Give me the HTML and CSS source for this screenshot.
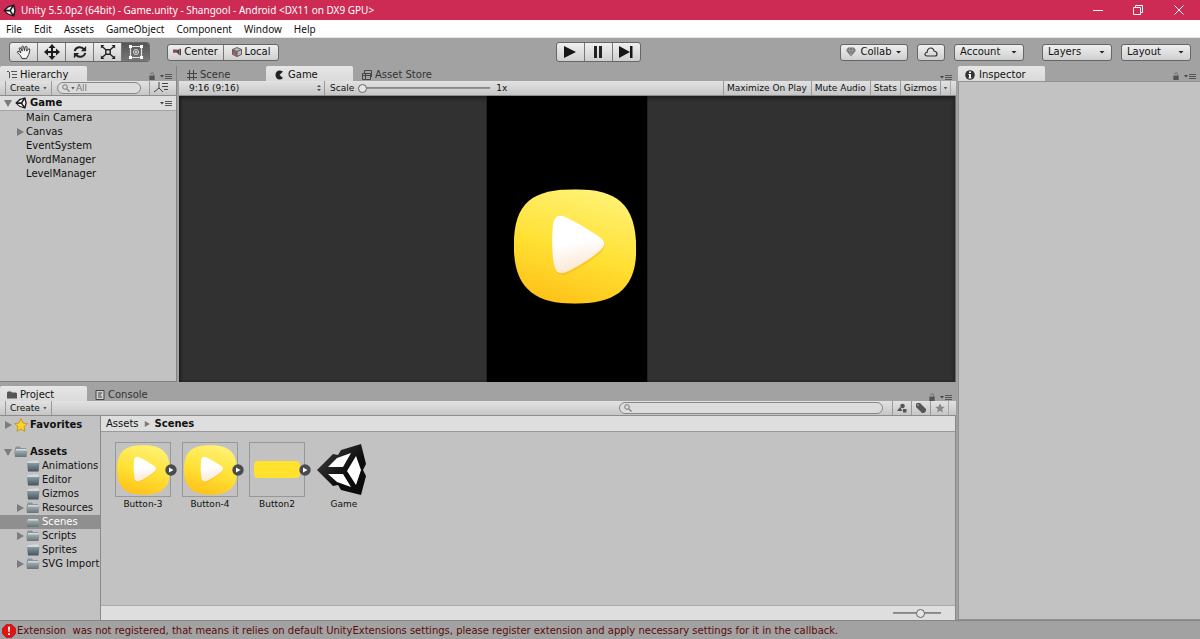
FILE: index.html
```html
<!DOCTYPE html>
<html lang="en">
<head>
<meta charset="utf-8">
<title>Unity 5.5.0p2 (64bit) - Game.unity - Shangool</title>
<link rel="stylesheet" href="styles.css">
</head>
<body>
<svg class="sprite" aria-hidden="true">
  <defs>
    <linearGradient id="yellow" x1="0.65" y1="0" x2="0.35" y2="1"><stop offset="0" stop-color="#fff274"/><stop offset="0.55" stop-color="#ffe033"/><stop offset="1" stop-color="#ffc219"/></linearGradient>
    <linearGradient id="white" x1="0.4" y1="0" x2="0.6" y2="1"><stop offset="0.45" stop-color="#fff"/><stop offset="1" stop-color="#fbe3cc"/></linearGradient>
    <linearGradient id="ink" x1="0" y1="0" x2="1" y2="1"><stop offset="0" stop-color="#444"/><stop offset="0.6" stop-color="#0c0c0c"/></linearGradient>
    <linearGradient id="folderfill" x1="0" y1="0" x2="0" y2="1"><stop offset="0" stop-color="#a3adaf"/><stop offset="1" stop-color="#66747a"/></linearGradient>
    <linearGradient id="foldershut" x1="0" y1="0" x2="0" y2="1"><stop offset="0" stop-color="#8b9ba3"/><stop offset="1" stop-color="#44535c"/></linearGradient>
  </defs>
  <symbol id="playart" viewBox="0 0 122 114">
    <path fill="url(#yellow)" d="M0 56C0 12 20 0 61 0C102 0 122 14 122 60C122 100 100 114 61 114C20 114 0 98 0 56Z"/>
    <path fill="#e9a21c" opacity=".3" d="M40 38Q41 26 51 29C63 34 77 43 87 50Q94 56 87 63C77 72 63 80 52 85Q43 88 41 77Q38 57 40 38Z"/>
    <path fill="url(#white)" d="M39 36Q40 24 50 27C62 32 76 41 86 48Q94 54 86 61C76 70 62 78 51 83Q42 86 40 75Q37 55 39 36Z"/>
  </symbol>
  <symbol id="unity" viewBox="0 0 50 52">
    <path fill="url(#ink)" d="M0 26L16 10L21 11L24 6L44 0L49 20L46 26L49 32L44 51L24 46L21 41L16 42Z"/>
    <path fill="#fff" d="M11 23L20 14L34 9L26 23ZM11 30H26L34 43L20 38ZM39 12L44 26L39 41L30 27Z"/>
  </symbol>
  <symbol id="unity-dark" viewBox="0 0 50 52">
    <path fill="#1a1a1a" d="M0 26L18 9L44 1L50 26L44 51L18 42Z"/>
    <path fill="#f4f4f4" d="M11 23L21 14L34 9L26 23ZM10 30H26L34 43L21 39ZM40 11L44 26L40 41L31 27Z"/>
  </symbol>
  <symbol id="hand" viewBox="0 0 18 16"><path fill="#f4f4f4" stroke="#222" stroke-linejoin="round" stroke-linecap="round" d="M6.500 15L5 12L1.500 8.500Q1.500 6.500 3.500 7.500L5.500 9L3.500 4Q4 2.500 5 3.500L7 7L6.500 2Q7.500 .5 8.500 2L9.500 6.500L10.500 2Q12 1 12.500 2.500L12 7L14 4.500Q16 4 15.500 6L14.500 10.500L12 15Z"/></symbol>
  <symbol id="move" viewBox="0 0 16 16"><path fill="#1c1c1c" d="M8 0L11.500 4H9V7H12V4.500L16 8L12 11.500V9H9V12H11.500L8 16L4.500 12H7V9H4V11.500L0 8L4 4.500V7H7V4H4.500Z"/></symbol>
  <symbol id="rotate" viewBox="0 0 16 16"><path fill="none" stroke="#222" stroke-width="2.2" d="M2 7C3 2 10 1 12.500 5M14 9C13 14 6 15 3.500 11"/><path fill="#222" d="M9 7H15V1ZM7 9H1V15Z"/></symbol>
  <symbol id="scale-tool" viewBox="0 0 18 16"><path fill="none" stroke="#222" stroke-width="1.600" d="M6.500 5.500H11.500V10.500H6.500ZM6 5L2 1.500M12 5L16 1.500M6 11L2 14.500M12 11L16 14.500"/><path fill="#222" d="M1 0H5L1 4ZM17 0H13L17 4ZM1 16H5L1 12ZM17 16H13L17 12Z"/></symbol>
  <symbol id="recttool" viewBox="0 0 16 16"><path fill="none" stroke="#e4e4e4" stroke-width="1.200" d="M2.500 2.500H13.500V13.500H2.500Z"/><circle cx="8" cy="8" r="2.500" fill="none" stroke="#ddd"/><circle cx="8" cy="8" r="1" fill="#eee"/><path fill="#fff" d="M1 1H4V4H1ZM12 1H15V4H12ZM1 12H4V15H1ZM12 12H15V15H12Z"/></symbol>
  <symbol id="pivot" viewBox="0 0 10 8"><path fill="#8b4b51" d="M0 1H5V5H0Z"/><path fill="#444" d="M5 2L8 0V8L5 5ZM8.500 0H10V8H8.500Z"/></symbol>
  <symbol id="cube" viewBox="0 0 10 10"><path fill="#bbb" stroke="#444" stroke-width=".8" d="M5 .5L9.500 2.500V7.500L5 9.500L.5 7.500V2.500Z"/><path fill="#a55b62" d="M1 3L5 5V9L1 7Z"/><path fill="none" stroke="#444" stroke-width=".8" d="M.5 2.500L5 4.500L9.500 2.500M5 4.500V9.500"/></symbol>
  <symbol id="play" viewBox="0 0 14 12"><path fill="#161616" d="M1 0L13 6L1 12Z"/></symbol>
  <symbol id="pause" viewBox="0 0 14 12"><path fill="#222" d="M3 0H6V12H3ZM8 0H11V12H8Z"/></symbol>
  <symbol id="step" viewBox="0 0 14 12"><path fill="#161616" d="M0 0L11 6L0 12ZM11 0H13.500V12H11Z"/></symbol>
  <symbol id="gem" viewBox="0 0 10 9"><path fill="#777" d="M2 0H8L10 3L5 9L0 3Z"/><path stroke="#aaa" stroke-width=".6" fill="none" d="M0 3H10M3.500 0V3L5 8L6.500 3V0"/></symbol>
  <symbol id="cloud" viewBox="0 0 14 10"><path fill="none" stroke="#333" stroke-width="1.200" d="M3 9Q.8 8.800 1 7Q1.200 5.300 3 5.500Q3.500 1 7 1Q9.500 1 10 4Q13 4.500 13 7Q13 9 11 9Z"/></symbol>
  <symbol id="list" viewBox="0 0 10 10"><path stroke="#555" d="M0 1.500H2M4 1.500H10M5 4.500H10M5 7.500H10M2.500 2V8" fill="none"/></symbol>
  <symbol id="grid" viewBox="0 0 10 10"><path stroke="#444" d="M2.500 0V10M6.500 0V10M0 3.500H10M0 7.500H10" fill="none"/></symbol>
  <symbol id="pac" viewBox="0 0 10 10"><path fill="#222" d="M8 1.500Q6 .5 4.500 .5A4 4.500 0 0 0 4.500 9.500Q6.500 9.500 8 8L4.500 5Z"/></symbol>
  <symbol id="bag" viewBox="0 0 10 10"><path fill="none" stroke="#444" d="M.5 3.500H8.500V9.500H.5ZM2.500 3V.5H9.500V7M.5 5.500H8.500M3.500 4V9"/></symbol>
  <symbol id="info" viewBox="0 0 10 10"><circle cx="5" cy="5" r="4.800" fill="#333"/><path fill="#fff" d="M4 1.500H6V3H4ZM3.500 4H6V7.500H6.500V8.500H3.500V7.500H4V5H3.500Z"/></symbol>
  <symbol id="lock" viewBox="0 0 8 9"><path fill="#555" d="M1 4H7V9H1Z"/><path fill="none" stroke="#666" d="M2.500 2.500Q3 .7 4.500 .7Q6 .8 6 4"/></symbol>
  <symbol id="menu" viewBox="0 0 12 7"><path fill="#444" d="M0 2H4L2 4.500Z"/><path stroke="#555" d="M5 1.500H12M5 3.500H12M5 5.500H12"/></symbol>
  <symbol id="tabfolder" viewBox="0 0 10 9"><path fill="#555" d="M0 2L1 1H4L5 2H9L10 3V8H0Z"/></symbol>
  <symbol id="doc" viewBox="0 0 9 10"><path fill="#d0d0d0" stroke="#444" d="M.5 .5H8.500V9.500H.5Z"/><path stroke="#444" d="M2.500 3H6.500M2.500 5H5.500M2.500 7H6.500"/></symbol>
  <symbol id="folder" viewBox="0 0 14 14"><path fill="#87949a" d="M1 3L2 1.500H6L7 3H12V6H1Z"/><path fill="#d5dadb" d="M2 4H12V6H2Z"/><path fill="url(#folderfill)" d="M0 5.500H13.500L12.500 12H1Z"/></symbol>
  <symbol id="folder-shut" viewBox="0 0 14 14"><path fill="#d5dadb" d="M1.500 3L2.500 2H6L7 1.500H12.500V5H1.500Z"/><path fill="url(#foldershut)" d="M1 4H13.500L12.500 12.500H2Z"/></symbol>
  <symbol id="star" viewBox="0 0 14 14"><path d="M7 .5L9 5L13.500 5.500L10 8.500L11 13.300L7 11L3 13.300L4 8.500L.5 5.500L5 5Z"/></symbol>
  <symbol id="search" viewBox="0 0 8 8"><circle cx="3" cy="3" r="2.300" fill="none" stroke="#777"/><path stroke="#777" stroke-width="1.200" d="M4.800 4.800L7.500 7.500"/></symbol>
  <symbol id="shapes" viewBox="0 0 10 9"><path fill="#555" d="M0 7.500L3 3.500L5.500 7.500Z"/><circle cx="5.500" cy="2.500" r="2.300" fill="#555"/><path fill="#555" d="M6 5.500H9.500V9H6Z"/></symbol>
  <symbol id="tag" viewBox="0 0 10 10"><path fill="#555" d="M0 1L1 0H4L10 6V8L8 10H6L0 4Z"/><circle cx="2" cy="2" r=".8" fill="#ccc"/></symbol>
  <symbol id="sort" viewBox="0 0 16 12"><path fill="none" stroke="#444" d="M6 0V6L1 10M6 6L10 10M9 1.500H15M9 4.500H15M11 7.500H15"/></symbol>
  <symbol id="badge" viewBox="0 0 12 12"><circle cx="6" cy="6" r="5.700" fill="#484b50"/><path fill="#fff" d="M4 3.500L8.500 6L4 8.500Z"/></symbol>
  <symbol id="error" viewBox="0 0 13 13"><path fill="#e31313" stroke="#9c0d0d" stroke-width=".6" d="M4 .5H9L12.500 4V9L9 12.500H4L.5 9V4Z"/><path fill="#fff" d="M5.500 2.500H7.500L7 7.500H6ZM5.600 8.500H7.400V10.300H5.600Z"/></symbol>
  <symbol id="right" viewBox="0 0 8 8"><path fill="#7c7c7c" d="M1 0L8 4L1 8Z"/></symbol>
  <symbol id="down" viewBox="0 0 8 8"><path fill="#7c7c7c" d="M0 1H8L4 8Z"/></symbol>
</svg>

<header class="titlebar">
  <svg class="i13"><use href="#unity-dark"/></svg>
  <h1 class="title">Unity 5.5.0p2 (64bit) - Game.unity - Shangool - Android &lt;DX11 on DX9 GPU&gt;</h1>
  <div class="winbtns">
    <button aria-label="Minimize"><svg class="i10" viewBox="0 0 10 10"><path d="M0 5.500H10"/></svg></button>
    <button aria-label="Restore"><svg class="i10" viewBox="0 0 10 10"><path d="M.5 2.500H7.500V9.500H.5ZM2.500 2.500V.5H9.500V7.500H7.500"/></svg></button>
    <button aria-label="Close"><svg class="i10" viewBox="0 0 10 10"><path d="M.5 .5L9.500 9.500M9.500 .5L.5 9.500"/></svg></button>
  </div>
</header>
<nav class="menubar">
  <button>File</button><button>Edit</button><button>Assets</button><button>GameObject</button><button>Component</button><button>Window</button><button>Help</button>
</nav>

<div class="toolbar">
  <div class="tools">
    <div class="group tall">
      <button aria-label="Hand"><svg class="i16"><use href="#hand"/></svg></button>
      <button aria-label="Move"><svg class="i16"><use href="#move"/></svg></button>
      <button aria-label="Rotate"><svg class="i14"><use href="#rotate"/></svg></button>
      <button aria-label="Scale"><svg class="i16"><use href="#scale-tool"/></svg></button>
      <button class="pressed" aria-label="Rect"><svg class="i16"><use href="#recttool"/></svg></button>
    </div>
    <div class="group wide">
      <button><svg class="i8"><use href="#pivot"/></svg>Center</button>
      <button><svg class="i10"><use href="#cube"/></svg>Local</button>
    </div>
  </div>
  <div class="group tall playback">
    <button aria-label="Play"><svg class="i14"><use href="#play"/></svg></button>
    <button aria-label="Pause"><svg class="i14"><use href="#pause"/></svg></button>
    <button aria-label="Step"><svg class="i14"><use href="#step"/></svg></button>
  </div>
  <div class="services">
    <button class="pill collab"><svg class="i10"><use href="#gem"/></svg>Collab<span class="caret"></span></button>
    <button class="pill cloud" aria-label="Cloud"><svg class="i14"><use href="#cloud"/></svg></button>
    <label class="drop"><select aria-label="Account"><option>Account</option></select><span class="caret"></span></label>
    <label class="drop apart"><select aria-label="Layers"><option>Layers</option></select><span class="caret"></span></label>
    <label class="drop"><select aria-label="Layout"><option>Layout</option></select><span class="caret"></span></label>
  </div>
</div>

<main class="workspace">
  <div class="left">
    <div class="upper">
      <section class="panel hierarchy">
        <div class="tabs">
          <button class="tab active"><svg class="i10"><use href="#list"/></svg>Hierarchy</button>
          <span class="tabtools"><svg class="i8"><use href="#lock"/></svg><svg class="menuicon"><use href="#menu"/></svg></span>
        </div>
        <div class="bar">
          <button class="cell create">Create<span class="caret small"></span></button>
          <label class="search"><svg class="i8"><use href="#search"/></svg><span class="caret small"></span><input type="text" placeholder="All" aria-label="Search hierarchy"></label>
          <button class="cell sort" aria-label="Sort"><svg class="i16"><use href="#sort"/></svg></button>
        </div>
        <div class="scene"><svg class="i8"><use href="#down"/></svg><svg class="i12"><use href="#unity-dark"/></svg><b>Game</b><svg class="menuicon end"><use href="#menu"/></svg></div>
        <ul class="rows objects">
          <li>Main Camera</li>
          <li><svg class="i8"><use href="#right"/></svg>Canvas</li>
          <li>EventSystem</li>
          <li>WordManager</li>
          <li>LevelManager</li>
        </ul>
      </section>
      <section class="panel game">
        <div class="tabs">
          <button class="tab"><svg class="i10"><use href="#grid"/></svg>Scene</button>
          <button class="tab active"><svg class="i10"><use href="#pac"/></svg>Game</button>
          <button class="tab"><svg class="i10"><use href="#bag"/></svg>Asset Store</button>
          <span class="tabtools"><svg class="menuicon"><use href="#menu"/></svg></span>
        </div>
        <div class="bar">
          <label class="ratio"><select aria-label="Aspect ratio"><option>9:16 (9:16)</option></select><span class="updown"></span></label>
          <label class="scale" for="scale">Scale</label>
          <input class="slider" id="scale" type="range" min="0" max="100" value="0">
          <span class="factor">1x</span>
          <button class="cell push">Maximize On Play</button>
          <button class="cell">Mute Audio</button>
          <button class="cell">Stats</button>
          <button class="cell">Gizmos</button>
          <button class="cell last" aria-label="Gizmo options"><span class="caret small"></span></button>
        </div>
        <div class="viewport">
          <svg class="stage" viewBox="0 0 160 285" role="img" aria-label="Game view"><path d="M0 0H160V285H0Z"/><use href="#playart" x="27" y="93" width="122" height="114"/></svg>
        </div>
      </section>
    </div>
    <section class="panel project">
      <div class="tabs">
        <button class="tab active"><svg class="i10"><use href="#tabfolder"/></svg>Project</button>
        <button class="tab"><svg class="i10"><use href="#doc"/></svg>Console</button>
        <span class="tabtools"><svg class="i8"><use href="#lock"/></svg><svg class="menuicon"><use href="#menu"/></svg></span>
      </div>
      <div class="bar">
        <button class="cell create">Create<span class="caret small"></span></button>
        <label class="search long"><svg class="i8"><use href="#search"/></svg><input type="text" aria-label="Search assets"></label>
        <button class="cell icon" aria-label="By type"><svg class="i10"><use href="#shapes"/></svg></button>
        <button class="cell icon" aria-label="By label"><svg class="i10"><use href="#tag"/></svg></button>
        <button class="cell icon closed" aria-label="Save search"><svg class="i10 greystar"><use href="#star"/></svg></button>
      </div>
      <div class="browser">
        <ul class="rows tree">
          <li class="top fav"><svg class="i8"><use href="#right"/></svg><svg class="i14 gold"><use href="#star"/></svg><b>Favorites</b></li>
          <li class="top"><svg class="i8"><use href="#down"/></svg><svg class="i14"><use href="#folder"/></svg><b>Assets</b></li>
          <li><svg class="i14"><use href="#folder-shut"/></svg>Animations</li>
          <li><svg class="i14"><use href="#folder-shut"/></svg>Editor</li>
          <li><svg class="i14"><use href="#folder-shut"/></svg>Gizmos</li>
          <li><svg class="i8"><use href="#right"/></svg><svg class="i14"><use href="#folder"/></svg>Resources</li>
          <li class="selected"><svg class="i14"><use href="#folder"/></svg>Scenes</li>
          <li><svg class="i8"><use href="#right"/></svg><svg class="i14"><use href="#folder"/></svg>Scripts</li>
          <li><svg class="i14"><use href="#folder-shut"/></svg>Sprites</li>
          <li><svg class="i8"><use href="#right"/></svg><svg class="i14"><use href="#folder"/></svg>SVG Import</li>
        </ul>
        <div class="content">
          <div class="crumbs"><span>Assets</span><svg class="i6"><use href="#right"/></svg><b>Scenes</b></div>
          <div class="assets">
            <figure><div class="thumb"><svg class="art"><use href="#playart"/></svg><svg class="badge"><use href="#badge"/></svg></div><figcaption>Button-3</figcaption></figure>
            <figure><div class="thumb"><svg class="art"><use href="#playart"/></svg><svg class="badge"><use href="#badge"/></svg></div><figcaption>Button-4</figcaption></figure>
            <figure><div class="thumb"><span class="bar-art"></span><svg class="badge"><use href="#badge"/></svg></div><figcaption>Button2</figcaption></figure>
            <figure><div class="thumb plain"><svg class="logo"><use href="#unity"/></svg></div><figcaption>Game</figcaption></figure>
          </div>
          <div class="foot"><input class="slider zoom" type="range" min="0" max="100" value="60" aria-label="Icon size"></div>
        </div>
      </div>
    </section>
  </div>
  <section class="panel inspector">
    <div class="tabs">
      <button class="tab active"><svg class="i10"><use href="#info"/></svg>Inspector</button>
      <span class="tabtools"><svg class="i8"><use href="#lock"/></svg><svg class="menuicon"><use href="#menu"/></svg></span>
    </div>
    <div class="empty"></div>
  </section>
</main>
<footer class="status"><svg class="i14"><use href="#error"/></svg><span>Extension&nbsp; was not registered, that means it relies on default UnityExtensions settings, please register extension and apply necessary settings for it in the callback.</span></footer>
</body>
</html>
```
FILE: styles.css
```css
* { box-sizing: border-box; }
body {
  margin: 0;
  height: 100vh;
  display: flex;
  flex-direction: column;
  background: #a2a2a2;
  color: #111;
  font: 10px/14px "DejaVu Sans", sans-serif;
}
button, input, select {
  margin: 0;
  padding: 0;
  border: 0;
  border-radius: 0;
  background: none;
  color: inherit;
  font: inherit;
  appearance: none;
}
button { display: flex; align-items: center; justify-content: center; white-space: nowrap; }
svg { display: block; flex: none; }
ul, figure, h1 { margin: 0; padding: 0; list-style: none; }
.sprite { position: absolute; width: 0; height: 0; }
.i6 { width: 6px; height: 6px; }
.i8 { width: 8px; height: 8px; }
.i10 { width: 10px; height: 10px; }
.i12 { width: 12px; height: 12px; }
.i13 { width: 13px; height: 13px; }
.i14 { width: 14px; height: 14px; }
.i16 { width: 16px; height: 16px; }
.menuicon { width: 12px; height: 7px; }

.caret {
  flex: none;
  width: 6px;
  height: 3px;
  background: #222;
  clip-path: polygon(0 0, 100% 0, 50% 100%);
}
.caret.small { width: 4px; height: 3px; background: #555; }

.titlebar {
  display: flex;
  align-items: center;
  flex: none;
  height: 20px;
  padding-left: 3px;
  gap: 5px;
  background: #cd2a54;
  color: #fff;
  font-family: "Noto Sans", sans-serif;
}
.title { font-size: 10px; font-weight: 400; }
.winbtns { display: flex; margin-left: auto; }
.winbtns button { width: 40px; height: 18px; }
.winbtns button:last-child { width: 42px; }
.winbtns path { fill: none; stroke: #fff; }

.menubar {
  display: flex;
  flex: none;
  gap: 12px;
  height: 18px;
  padding-left: 6px;
  background: #fff;
  border-bottom: 1px solid #e4e4e4;
  font-family: "Noto Sans", sans-serif;
}

.toolbar {
  display: grid;
  grid-template-columns: 1fr auto 1fr;
  align-items: center;
  flex: none;
  height: 28px;
  padding: 0 9px;
}
.tools { display: flex; align-items: center; gap: 17px; }
.services { display: flex; justify-content: flex-end; gap: 9px; }
.group, .pill, .drop {
  display: flex;
  border: 1px solid #666;
  border-radius: 3px;
  background: linear-gradient(#efefef, #cfcfcf);
  overflow: hidden;
}
.group button + button { border-left: 1px solid #777; }
.tall button { width: 28px; height: 18px; }
.tall button:first-child { width: 27px; }
.wide button { width: 55px; height: 15px; gap: 3px; }
.group .pressed { background: linear-gradient(#555, #777); }
.playback { margin-right: 4px; }
.pill { height: 17px; }
.collab { width: 68px; gap: 4px; }
.cloud { width: 28px; }
.drop { position: relative; align-items: center; width: 70px; height: 17px; }
.drop.apart { margin-left: 9px; }
.drop select { width: 100%; padding-left: 5px; }
.drop .caret { position: absolute; right: 6px; }

.workspace {
  flex: 1;
  min-height: 0;
  display: grid;
  grid-template-columns: 956fr 242fr;
  grid-template-rows: minmax(0, 1fr);
  gap: 2px;
}
.left { display: grid; grid-template-rows: minmax(0, 316fr) minmax(0, 234fr); gap: 4px; min-width: 0; }
.upper { display: grid; grid-template-columns: 177px 1fr; grid-template-rows: minmax(0, 1fr); gap: 2px; }
.panel { display: flex; flex-direction: column; min-width: 0; min-height: 0; }
.hierarchy { background: linear-gradient(#a2a2a2 15px, #c2c2c2 15px); border-right: 1px solid #858585; border-bottom: 1px solid #808080; }

.tabs { display: flex; height: 15px; flex: none; }
.tab { justify-content: flex-start; gap: 3px; min-width: 87px; padding: 2px 7px 0; color: #333; }
.tab.active { background: linear-gradient(#e6e6e6, #dadada); color: #111; border-radius: 2px 2px 0 0; }
.game .tab { padding-left: 9px; }
.game .tab:first-child { padding-left: 8px; }
.project .tab + .tab { padding-left: 8px; }
.tabtools { display: flex; align-items: flex-end; gap: 4px; margin-left: auto; padding-right: 4px; }
.hierarchy .tabtools, .inspector .tabtools { padding-bottom: 1px; }

.bar {
  display: flex;
  align-items: center;
  flex: none;
  height: 15px;
  background: linear-gradient(#e2e2e2, #c6c6c6);
  border-bottom: 1px solid #8c8c8c;
  font-size: 9px;
}
.cell { height: 14px; padding: 0 3px; border-left: 1px solid #999; }
.create { margin-left: 5px; padding: 0 4px; border-right: 1px solid #999; gap: 3px; }
.search {
  display: flex;
  align-items: center;
  gap: 1px;
  width: 84px;
  height: 12px;
  margin-left: 5px;
  padding-left: 4px;
  border: 1px solid #888;
  border-radius: 6px;
  background: #dcdcdc;
}
.search input { min-width: 0; flex: 1; height: 10px; line-height: 10px; }
.search input::placeholder { color: #777; opacity: 1; }
.search.long { width: 264px; margin-left: auto; margin-right: 9px; }
.sort { margin-left: auto; margin-right: 4px; }
.icon { width: 19px; }
.icon.closed { border-right: 1px solid #aaa; margin-right: 7px; }
.greystar { fill: #888; }

.scene {
  display: flex;
  align-items: center;
  flex: none;
  height: 15px;
  padding: 0 4px;
  gap: 3px;
  background: #dedede;
  border-bottom: 1px solid #a5a5a5;
}
.end { margin-left: auto; }
.rows li { display: flex; align-items: center; height: 14px; white-space: nowrap; }
.objects li { padding-left: 26px; }
.objects svg { margin-left: -10px; margin-right: 2px; }

.ratio { position: relative; display: flex; align-items: center; width: 146px; height: 14px; padding-left: 10px; border-right: 1px solid #999; }
.ratio select { width: 100%; }
.updown { position: absolute; right: 3px; width: 4px; height: 6px; background: #444; clip-path: polygon(50% 0, 100% 35%, 0 35%, 0 65%, 100% 65%, 50% 100%, 0 65%, 0 35%); }
.scale { padding: 0 4px 0 5px; }
.factor { padding-left: 6px; }
.slider { width: 132px; height: 10px; background: linear-gradient(#808080, #999) center / 100% 2px no-repeat; }
.slider::-webkit-slider-thumb { appearance: none; width: 9px; height: 9px; border: 1px solid #666; border-radius: 50%; background: #e6e6e6; }
.push { margin-left: auto; }
.bar .push, .bar .push + .cell { padding-right: 4px; }
.cell.last { width: 11px; margin-right: 5px; border-right: 1px solid #aaa; }
.viewport {
  flex: 1;
  min-height: 0;
  background: #313131;
  border-right: 1px solid #666;
  box-shadow: inset 0 2px 4px #1c1c1c, inset 2px 0 2px #222;
}
.stage { width: 100%; height: 100%; }

.browser { flex: 1; display: grid; grid-template-columns: 100px 1fr; min-height: 0; background: #c2c2c2; border-right: 1px solid #888; }
.tree { overflow: hidden; padding-top: 2px; }
.tree li { padding-left: 26px; gap: 2px; }
.tree .i8:first-child { margin-left: -10px; }
.tree li.top { padding-left: 14px; gap: 2px; }
.tree li.fav { margin-bottom: 13px; }
.tree li.selected { background: #8f8f8f; color: #fff; }
.gold { fill: #ffd42a; stroke: #c79a12; }
.content { display: flex; flex-direction: column; border-left: 1px solid #8a8a8a; min-width: 0; }
.crumbs { display: flex; align-items: center; flex: none; gap: 5px; height: 16px; padding-left: 5px; background: #dedede; border-bottom: 1px solid #999; }
.assets { flex: 1; display: flex; gap: 11px; padding: 10px 14px; font-size: 9px; }
.assets figure { width: 56px; text-align: center; }
.thumb { position: relative; display: grid; place-items: center; height: 55px; border: 1px solid #989898; }
.thumb.plain { border-color: transparent; justify-items: start; }
.art { width: 53px; height: 50px; }
.logo { width: 50px; height: 52px; }
.bar-art { width: 46px; height: 17px; border-radius: 4px; background: #ffe12e; }
.badge { position: absolute; right: -7px; width: 12px; height: 12px; }
.foot { display: flex; align-items: center; justify-content: flex-end; flex: none; height: 15px; padding-right: 14px; background: #dedede; border-top: 1px solid #aaa; }
.zoom { width: 48px; }

.inspector .tab { gap: 4px; }
.empty { flex: 1; background: #c2c2c2; border: 1px solid #929292; border-right: 0; }

.status {
  display: flex;
  align-items: center;
  flex: none;
  gap: 1px;
  height: 19px;
  padding: 2px 2px 0;
  border-top: 1px solid #858585;
  color: #5c0b0b;
  white-space: nowrap;
}
```
